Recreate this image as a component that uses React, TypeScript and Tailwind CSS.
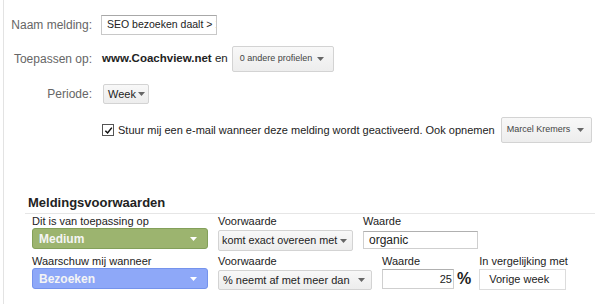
import React from 'react';

function Caret({ className = '' }: { className?: string }) {
  return (
    <svg viewBox="0 0 7 4" aria-hidden="true" className={`h-[4px] w-[7px] shrink-0 ${className}`}>
      <path fill="currentColor" d="M0 0h7L3.5 4Z" />
    </svg>
  );
}

function GrayButton({
  label,
  className = '',
  textClass = 'text-[11px]',
}: {
  label: string;
  className?: string;
  textClass?: string;
}) {
  return (
    <div
      className={`flex shrink-0 items-center justify-between gap-[2px] rounded-[2px] border border-[#d3d3d3] bg-gradient-to-b from-[#f8f8f8] to-[#ededed] text-[#333] ${className}`}
    >
      <span className={`whitespace-nowrap ${textClass}`}>{label}</span>
      <Caret className="text-[#666]" />
    </div>
  );
}

function ColorSelect({ label, tone }: { label: string; tone: 'green' | 'blue' }) {
  const cls =
    tone === 'green'
      ? 'border-[#83a05a] bg-[#9cb46f]'
      : 'border-[#7593ec] bg-[#8ea8f8]';
  return (
    <div
      className={`flex h-[21px] w-[176px] items-center justify-between rounded-[3px] border pl-[6px] pr-[10px] ${cls}`}
    >
      <span className="text-[12px] font-bold text-[#f4f4f4]">{label}</span>
      <Caret className="text-white" />
    </div>
  );
}

function Field({ label, children }: { label: string; children: React.ReactNode }) {
  return (
    <div className="flex shrink-0 flex-col">
      <span className="h-[14px] whitespace-nowrap text-[11px] leading-[14px] text-[#222]">{label}</span>
      {children}
    </div>
  );
}

export default function App() {
  return (
    <div
      className="h-[304px] w-[595px] overflow-hidden bg-white pl-[3px]"
      style={{ fontFamily: '"Liberation Sans", Arial, sans-serif' }}
    >
      <div className="flex h-full flex-col border-l border-[#e3e3e3]">
        <div className="flex flex-col pt-[15px]">
          <div className="flex h-[20px] items-center">
            <span className="w-[88px] text-right text-[12px] text-[#666]">Naam melding:</span>
            <div className="ml-[9px] flex h-[20px] w-[116px] items-center overflow-hidden border border-[#c8c8c8] border-t-[#a8a8a8] pl-[5px]">
              <span className="whitespace-nowrap text-[10.5px] text-[#222]">SEO bezoeken daalt &gt; 10%</span>
            </div>
          </div>

          <div className="mt-[11px] flex h-[26px] items-center">
            <span className="w-[88px] text-right text-[12px] text-[#666]">Toepassen op:</span>
            <span className="ml-[10px] whitespace-nowrap text-[11.5px] text-[#222]">
              <b>www.Coachview.net</b> en
            </span>
            <GrayButton
              label="0 andere profielen"
              className="ml-[4px] h-[26px] w-[102px] pl-[7px] pr-[9px]"
              textClass="text-[9px] text-[#444]"
            />
          </div>

          <div className="mt-[12px] flex h-[20px] items-center">
            <span className="w-[88px] text-right text-[12px] text-[#666]">Periode:</span>
            <GrayButton
              label="Week"
              className="ml-[11px] h-[20px] w-[46px] pl-[4px] pr-[5px]"
              textClass="text-[11px] text-[#222]"
            />
          </div>

          <div className="mt-[13px] flex h-[26px] items-center">
            <span className="ml-[98px] flex h-[12px] w-[12px] shrink-0 items-center justify-center border border-[#555] bg-white">
              <svg viewBox="0 0 10 10" className="h-[9px] w-[9px]" aria-hidden="true">
                <path d="M1.5 5.2 4 7.7 8.7 1.8" fill="none" stroke="#111" strokeWidth="1.7" />
              </svg>
            </span>
            <span className="ml-[4px] whitespace-nowrap text-[11px] text-[#222]">
              Stuur mij een e-mail wanneer deze melding wordt geactiveerd. Ook opnemen
            </span>
            <GrayButton
              label="Marcel Kremers"
              className="ml-[6px] h-[26px] w-[91px] pl-[5px] pr-[7px]"
              textClass="text-[9px] text-[#444]"
            />
          </div>
        </div>

        <div className="mt-[52px] pl-[21px]">
          <h2 className="ml-[3px] text-[13px] font-bold leading-[16px] text-[#222]">Meldingsvoorwaarden</h2>
          <div className="mt-[2px] h-[1px] bg-[#e6e6e6]" />

          <div className="flex gap-[10px] pl-[7px]">
            <Field label="Dit is van toepassing op">
              <ColorSelect label="Medium" tone="green" />
            </Field>
            <Field label="Voorwaarde">
              <GrayButton
                label="komt exact overeen met"
                className="mt-[2px] h-[21px] w-[135px] pl-[3px] pr-[5px]"
                textClass="text-[10.8px] text-[#222]"
              />
            </Field>
            <Field label="Waarde">
              <div className="mt-[3px] flex h-[18px] w-[115px] items-center border border-[#cfcfcf] border-t-[#b0b0b0] pl-[5px] text-[12px] text-[#222]">
                organic
              </div>
            </Field>
          </div>

          <div className="mt-[3px] flex pl-[7px]">
            <Field label="Waarschuw mij wanneer">
              <ColorSelect label="Bezoeken" tone="blue" />
            </Field>
            <div className="ml-[10px]">
              <Field label="Voorwaarde">
                <GrayButton
                  label="% neemt af met meer dan"
                  className="mt-[2px] h-[20px] w-[154px] pl-[4px] pr-[6px]"
                  textClass="text-[11px] text-[#222]"
                />
              </Field>
            </div>
            <div className="ml-[10px]">
              <Field label="Waarde">
                <div className="mt-[1px] flex h-[20px] w-[72px] items-center justify-end border border-[#cfcfcf] border-t-[#b0b0b0] pr-[1px] text-[11px] text-[#222]">
                  25
                </div>
              </Field>
            </div>
            <span className="ml-[3px] mt-[16px] text-[16px] font-bold leading-[18px] text-[#222]">%</span>
            <div className="ml-[8px]">
              <Field label="In vergelijking met">
                <div className="mt-[1px] flex h-[21px] w-[87px] items-center border border-[#dcdcdc] pl-[9px] text-[11px] text-[#222]">
                  Vorige week
                </div>
              </Field>
            </div>
          </div>
        </div>
      </div>
    </div>
  );
}
